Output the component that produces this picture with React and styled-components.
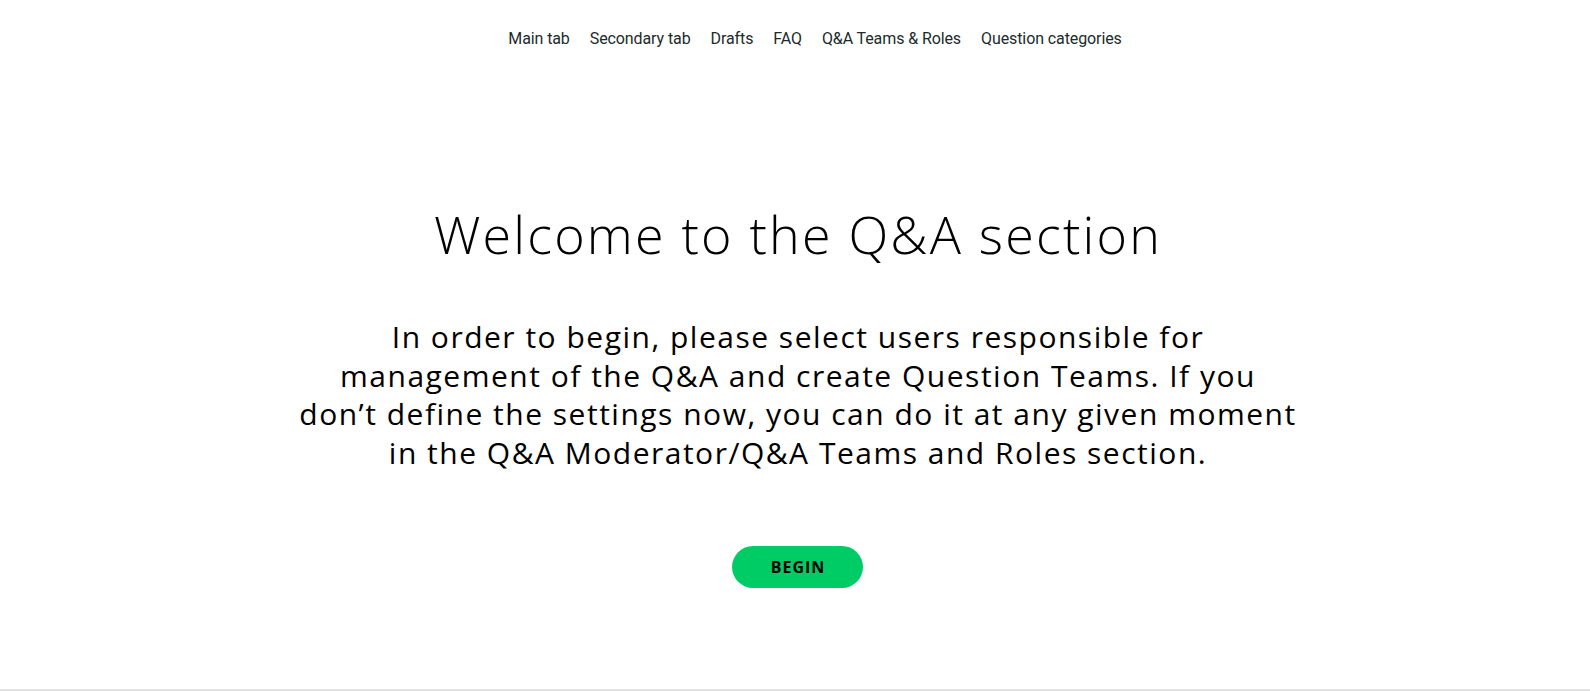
import React from 'react';
import styled, { createGlobalStyle } from 'styled-components';

const GlobalStyle = createGlobalStyle`
	html, body {
		margin: 0;
		padding: 0;
		background: #ffffff;
	}
	body {
		font-family: 'Open Sans', 'Liberation Sans', sans-serif;
		color: #000;
	}
`;

const tabs = ['Main tab', 'Secondary tab', 'Drafts', 'FAQ', 'Q&A Teams & Roles', 'Question categories'];

function App() {
	const [active, setActive] = React.useState(null);

	return (
		<>
			<GlobalStyle />
			<Page>
				<Nav>
					{tabs.map((tab, i) => (
						<Tab key={tab} $active={active === i} onClick={() => setActive(i)}>
							{tab}
						</Tab>
					))}
				</Nav>
				<Welcome>
					<Title>Welcome to the Q&amp;A section</Title>
					<Lead>
						In order to begin, please select users responsible for
						<br />
						management of the Q&amp;A and create Question Teams. If you
						<br />
						don’t define the settings now, you can do it at any given moment
						<br />
						in the Q&amp;A Moderator/Q&amp;A Teams and Roles section.
					</Lead>
					<BeginButton type='button'>BEGIN</BeginButton>
				</Welcome>
			</Page>
		</>
	);
}

const Page = styled.div`
	height: 691px;
	box-sizing: border-box;
	padding-left: 6px;
	border-bottom: 2px solid #e2e2e2;
	display: flex;
	flex-direction: column;
	align-items: center;
`;

const Nav = styled.nav`
	display: flex;
	gap: 20px;
	padding-top: 29px;
	padding-left: 34px;
`;

const Tab = styled.button`
	border: none;
	background: none;
	padding: 0;
	cursor: pointer;
	font-family: 'Roboto', 'Liberation Sans', sans-serif;
	font-size: 16px;
	line-height: 20px;
	letter-spacing: -0.1px;
	color: ${p => (p.$active ? '#00cc66' : '#1c2b2b')};
`;

const Welcome = styled.section`
	display: flex;
	flex-direction: column;
	align-items: center;
	padding-top: 153px;
`;

const Title = styled.h1`
	margin: 0;
	font-family: 'Open Sans', 'Liberation Sans', sans-serif;
	font-weight: 300;
	font-size: 52px;
	line-height: 64px;
	letter-spacing: 2.2px;
`;

const Lead = styled.p`
	margin: 52px 0 0;
	text-align: center;
	font-family: 'Open Sans', 'Liberation Sans', sans-serif;
	font-weight: 400;
	font-size: 30px;
	line-height: 38.7px;
	letter-spacing: 1.5px;
`;

const BeginButton = styled.button`
	margin-top: 73px;
	width: 131px;
	height: 42px;
	border: none;
	border-radius: 21px;
	background: #00cc66;
	color: #000;
	font-family: 'Open Sans', 'Liberation Sans', sans-serif;
	font-weight: 700;
	font-size: 16px;
	letter-spacing: 1px;
	cursor: pointer;
`;

export default App;
